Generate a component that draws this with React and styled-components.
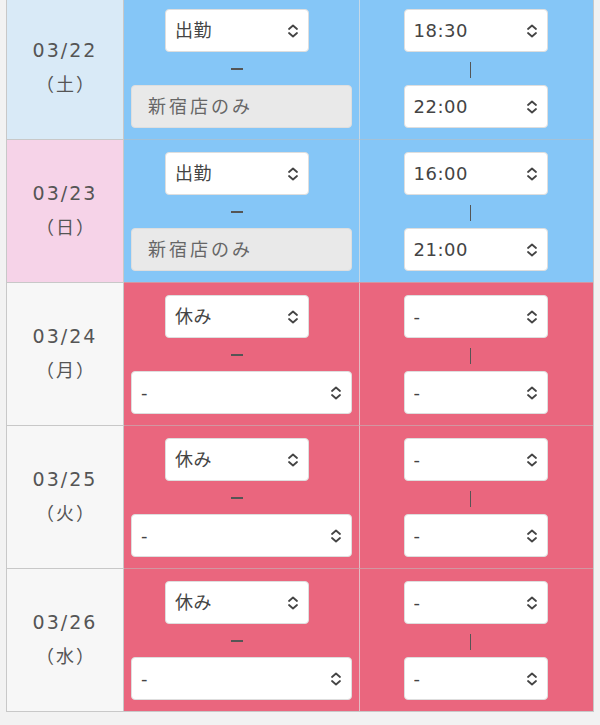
import React from 'react';
import styled, { createGlobalStyle } from 'styled-components';

const GlobalStyle = createGlobalStyle`
  html, body {
    margin: 0;
    padding: 0;
    background: #f2f2f2;
  }
  body {
    font-family: "DejaVu Sans", "Noto Sans CJK JP", sans-serif;
    color: #555;
  }
`;

const Page = styled.div`
  padding: 0 6px;
  overflow: hidden;
  height: 725px;
  box-sizing: border-box;
`;

const Table = styled.div`
  display: grid;
  grid-template-columns: 117px 1fr 1fr;
  margin-top: -4px;
  border-left: 1px solid #c8c8c8;
  border-right: 1px solid #c8c8c8;
  border-bottom: 1px solid #c8c8c8;
  background: #c8c8c8;
`;

const dateTones = {
  sat: '#d9eaf7',
  sun: '#f6d3e8',
  normal: '#f7f7f7',
};

const workTones = {
  work: '#85c6f7',
  off: '#ea667e',
};

const DateCell = styled.div`
  background: ${p => dateTones[p.$tone]};
  height: 143px;
  border-top: 1px solid #c8c8c8;
  border-right: 1px solid #c8c8c8;
  display: flex;
  flex-direction: column;
  align-items: center;
  justify-content: center;
  gap: 9px;
  padding-bottom: 2px;
  box-sizing: border-box;
`;

const DateText = styled.div`
  font-size: 19px;
  letter-spacing: 2px;
  color: #555;
`;

const DayText = styled.div`
  font-family: "Noto Sans CJK JP", sans-serif;
  font-size: 18px;
  letter-spacing: 2px;
  padding-left: 2px;
  color: #555;
`;

const WorkCell = styled.div`
  background: ${p => workTones[p.$tone]};
  height: 143px;
  border-top: 1px solid rgba(190, 190, 190, 0.55);
  border-left: ${p => (p.$divider ? '1px solid rgba(225, 225, 225, 0.7)' : 'none')};
  display: flex;
  flex-direction: column;
  align-items: center;
  padding: 12px 7px 0;
  box-sizing: border-box;
`;

const TopRow = styled.div`
  display: flex;
  justify-content: center;
  width: 100%;
  padding-right: ${p => p.$shift || 0}px;
  box-sizing: border-box;
`;

const Dash = styled.div`
  width: 12px;
  height: 2px;
  background: #555;
  margin: 16px 0 15px;
  transform: translateX(-5px);
`;

const VBar = styled.div`
  width: 1px;
  height: 16px;
  background: #555;
  margin: 10px 0 7px;
  transform: translateX(-6px);
`;

const SelectWrap = styled.div`
  position: relative;
  width: ${p => p.$width}px;
  height: 43px;
  margin-left: ${p => p.$nudge || 0}px;
`;

const Select = styled.select`
  appearance: none;
  -webkit-appearance: none;
  width: 100%;
  height: 100%;
  border: 1px solid #dedede;
  border-radius: 4px;
  background: ${p => (p.disabled ? '#e9e9e9' : '#fff')};
  color: ${p => (p.disabled ? '#666' : '#444')};
  opacity: 1;
  font-family: "DejaVu Sans", "Noto Sans CJK JP", sans-serif;
  font-size: 18px;
  padding: 0 0 0 ${p => (p.disabled ? 16 : 9)}px;
  letter-spacing: ${p => (p.disabled ? '3px' : '0.5px')};
  box-sizing: border-box;
  outline: none;
`;

const Chevron = styled.svg`
  position: absolute;
  right: 10px;
  top: 50%;
  transform: translateY(-50%);
  pointer-events: none;
`;

const SelectBox = ({ width, value, disabled, noIcon, nudge }) => (
  <SelectWrap $width={width} $nudge={nudge}>
    <Select disabled={disabled} defaultValue={value}>
      <option value={value}>{value}</option>
    </Select>
    {!noIcon && (
      <Chevron width="12" height="16" viewBox="0 0 12 16" fill="none">
        <path d="M2 6 L6 2.5 L10 6" stroke="#444" strokeWidth="1.8" strokeLinecap="round" strokeLinejoin="round" />
        <path d="M2 10 L6 13.5 L10 10" stroke="#444" strokeWidth="1.8" strokeLinecap="round" strokeLinejoin="round" />
      </Chevron>
    )}
  </SelectWrap>
);

const rows = [
  { date: '03/22', day: '（土）', tone: 'sat', work: true, from: '18:30', to: '22:00' },
  { date: '03/23', day: '（日）', tone: 'sun', work: true, from: '16:00', to: '21:00' },
  { date: '03/24', day: '（月）', tone: 'normal', work: false },
  { date: '03/25', day: '（火）', tone: 'normal', work: false },
  { date: '03/26', day: '（水）', tone: 'normal', work: false },
];

export default function App() {
  return (
    <Page>
      <GlobalStyle />
      <Table>
        {rows.map(r => (
          <React.Fragment key={r.date}>
            <DateCell $tone={r.tone}>
              <DateText>{r.date}</DateText>
              <DayText>{r.day}</DayText>
            </DateCell>
            <WorkCell $tone={r.work ? 'work' : 'off'}>
              <TopRow $shift={9}>
                <SelectBox width={144} value={r.work ? '出勤' : '休み'} />
              </TopRow>
              <Dash />
              {r.work ? (
                <SelectBox width={221} value="新宿店のみ" disabled noIcon />
              ) : (
                <SelectBox width={221} value="-" />
              )}
            </WorkCell>
            <WorkCell $tone={r.work ? 'work' : 'off'} $divider>
              <SelectBox width={144} value={r.work ? r.from : '-'} nudge={-2} />
              <VBar />
              <SelectBox width={144} value={r.work ? r.to : '-'} nudge={-2} />
            </WorkCell>
          </React.Fragment>
        ))}
      </Table>
    </Page>
  );
}
